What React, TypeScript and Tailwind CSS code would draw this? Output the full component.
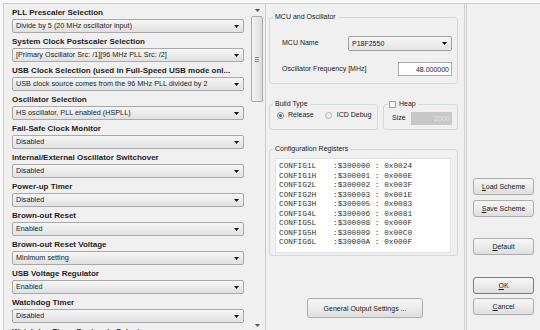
import React from "react";

interface Row {
  label: string;
  value: string;
}

const SETTINGS: Row[] = [
  { label: "PLL Prescaler Selection", value: "Divide by 5 (20 MHz oscillator input)" },
  { label: "System Clock Postscaler Selection", value: "[Primary Oscillator Src: /1][96 MHz PLL Src: /2]" },
  { label: "USB Clock Selection (used in Full-Speed USB mode onl...", value: "USB clock source comes from the 96 MHz PLL divided by 2" },
  { label: "Oscillator Selection", value: "HS oscillator, PLL enabled (HSPLL)" },
  { label: "Fail-Safe Clock Monitor", value: "Disabled" },
  { label: "Internal/External Oscillator Switchover", value: "Disabled" },
  { label: "Power-up Timer", value: "Disabled" },
  { label: "Brown-out Reset", value: "Enabled" },
  { label: "Brown-out Reset Voltage", value: "Minimum setting" },
  { label: "USB Voltage Regulator", value: "Enabled" },
  { label: "Watchdog Timer", value: "Disabled" },
  { label: "Watchdog Timer Postscale Select", value: "1:32768" },
];

const REGISTERS: [string, string, string][] = [
  ["CONFIG1L", "$300000", "0x0024"],
  ["CONFIG1H", "$300001", "0x000E"],
  ["CONFIG2L", "$300002", "0x003F"],
  ["CONFIG2H", "$300003", "0x001E"],
  ["CONFIG3H", "$300005", "0x0083"],
  ["CONFIG4L", "$300006", "0x0081"],
  ["CONFIG5L", "$300008", "0x000F"],
  ["CONFIG5H", "$300009", "0x00C0"],
  ["CONFIG6L", "$30000A", "0x000F"],
];

function Arrow({ className = "" }: { className?: string }) {
  return (
    <svg width="5" height="3" viewBox="0 0 5 3" className={className}>
      <path d="M0 0h5L2.5 3z" fill="currentColor" />
    </svg>
  );
}

function Combo({ value, width }: { value: string; width: string }) {
  return (
    <div
      className={`flex h-[14px] ${width} items-center justify-between rounded-[2px] border border-[#a9a9a9] bg-linear-to-b from-[#f6f6f6] to-[#e1e1e1] pl-[3px] pr-[4px] text-[7.25px] leading-none text-[#1c1c1c]`}
    >
      <span className="truncate">{value}</span>
      <Arrow className="shrink-0 text-[#111]" />
    </div>
  );
}

function Button({ children, className = "" }: { children: React.ReactNode; className?: string }) {
  return (
    <button
      className={`flex items-center justify-center rounded-[3px] border bg-linear-to-b from-[#f7f7f7] via-[#ececec] to-[#dedede] text-[7px] leading-none text-[#1a1a1a] ${className}`}
    >
      {children}
    </button>
  );
}

function Group({ title, className = "", children }: { title: React.ReactNode; className?: string; children: React.ReactNode }) {
  return (
    <fieldset className={`rounded-[3px] border border-[#d3dadf] ${className}`}>
      <legend className="ml-[3px] flex items-center px-[2px] text-[7px] leading-[10px] text-[#1a1a1a]">{title}</legend>
      {children}
    </fieldset>
  );
}

export default function App() {
  return (
    <div className="h-[330px] w-[540px] overflow-hidden bg-[#f8f8f8] pl-[3px] pt-[3px] font-['Liberation_Sans',Arial,sans-serif]">
      <div className="flex h-[327px] border-l border-t border-[#cfcfcf] bg-[#f0f0f0]">
        {/* settings list */}
        <div className="flex h-full w-[262px] border-r border-[#cdcdcd]">
          <div className="flex w-[247px] flex-col pl-[8px] pt-[3px]">
            {SETTINGS.map((r) => (
              <div key={r.label} className="flex h-[29px] shrink-0 flex-col">
                <div className="h-[12px] whitespace-nowrap text-[8px] font-bold leading-[12px] text-[#1e1e1e]">{r.label}</div>
                <Combo value={r.value} width="w-[232px]" />
              </div>
            ))}
          </div>
          <div className="flex w-[12px] flex-col items-center">
            <Arrow className="mt-[5px] text-[#555]" />
            <div className="mt-[4px] flex h-[86px] w-[12px] items-center justify-center rounded-[2px] border border-[#a8a8a8] bg-linear-to-r from-[#f4f4f4] to-[#dcdcdc]">
              <div className="flex flex-col gap-[1px]">
                <div className="h-px w-[4px] bg-[#8a8a8a]" />
                <div className="h-px w-[4px] bg-[#8a8a8a]" />
                <div className="h-px w-[4px] bg-[#8a8a8a]" />
              </div>
            </div>
            <div className="flex-1" />
            <Arrow className="mb-[3px] text-[#555]" />
          </div>
        </div>

        {/* MCU / build / registers */}
        <div className="flex w-[198px] flex-col pl-[3px] pt-[8px]">
          <Group title="MCU and Oscillator" className="w-[189px] pb-[7px]">
            <div className="flex flex-col gap-[11px] pl-[12px] pr-[5px] pt-[14px] text-[7px] text-[#1a1a1a]">
              <div className="flex h-[15px] items-center justify-between">
                <span>MCU Name</span>
                <div className="flex h-[15px] w-[104px] items-center justify-between rounded-[2px] border border-[#a0a0a0] bg-linear-to-b from-[#f7f7f7] to-[#e4e4e4] pl-[3px] pr-[4px] leading-none">
                  <span>P18F2550</span>
                  <Arrow className="text-[#111]" />
                </div>
              </div>
              <div className="flex h-[14px] items-center justify-between">
                <span>Oscillator Frequency [MHz]</span>
                <div className="flex h-[14px] w-[54px] items-center justify-end border border-[#abadb3] bg-white pr-[2px] leading-none">48.000000</div>
              </div>
            </div>
          </Group>

          <div className="mt-[15px] flex w-[189px] items-stretch gap-[5px]">
            <Group title="Build Type" className="w-[109px] pb-[8px]">
              <div className="flex h-[10px] items-center pl-[7px] pt-[2px] text-[7px] text-[#1a1a1a]">
                <span className="flex h-[7px] w-[7px] items-center justify-center rounded-full border border-[#7f8a93] bg-[#eef2f5]">
                  <span className="h-[3px] w-[3px] rounded-full bg-[#2f6fa6]" />
                </span>
                <span className="ml-[4px]">Release</span>
                <span className="ml-[11px] h-[7px] w-[7px] rounded-full border border-[#b5b5b5] bg-[#ececec]" />
                <span className="ml-[5px]">ICD Debug</span>
              </div>
            </Group>
            <Group
              title={
                <>
                  <span className="mr-[3px] h-[7px] w-[7px] border border-[#a3a3a3] bg-[#f6f6f6]" />
                  Heap
                </>
              }
              className="w-[75px] pb-[4px]"
            >
              <div className="flex items-center pl-[8px] pt-[3px] text-[7px] text-[#1a1a1a]">
                <span>Size</span>
                <div className="ml-[5px] flex h-[13px] w-[41px] items-center justify-end bg-[#c8c8c8] pr-[2px] leading-none text-[#e6e6e6]">2000</div>
              </div>
            </Group>
          </div>

          <Group title="Configuration Registers" className="mt-[14px] w-[189px] pb-[2px]">
            <div className="ml-[5px] mt-[4px] h-[95px] w-[176px] border border-[#e2e2e2] bg-white pl-[3px] pt-[3px] font-['Liberation_Mono',monospace] text-[7.75px] leading-[9.5px] text-[#333]">
              {REGISTERS.map(([n, a, v]) => (
                <div key={n} className="flex whitespace-pre">
                  <span className="w-[54px]">{n}</span>
                  <span>{`:${a} : ${v}`}</span>
                </div>
              ))}
            </div>
          </Group>

          <Button className="ml-[38px] mt-[42px] h-[20px] w-[116px] border-[#acacac]">General Output Settings ...</Button>
        </div>

        {/* divider */}
        <div className="w-[3px] border-x border-[#d2d2d2]" />

        {/* actions */}
        <div className="flex flex-1 flex-col pl-[6px] pt-[174px]">
          <Button className="h-[17px] w-[61px] border-[#adadad]">
            <u>L</u>oad Scheme
          </Button>
          <Button className="mt-[5px] h-[17px] w-[61px] border-[#adadad]">
            <u>S</u>ave Scheme
          </Button>
          <Button className="mt-[21px] h-[17px] w-[61px] border-[#adadad]">
            <u>D</u>efault
          </Button>
          <Button className="mt-[22px] h-[17px] w-[61px] border-[#6b7f93]">
            <u>O</u>K
          </Button>
          <Button className="mt-[4px] h-[17px] w-[61px] border-[#adadad]">
            <u>C</u>ancel
          </Button>
        </div>
      </div>
    </div>
  );
}
